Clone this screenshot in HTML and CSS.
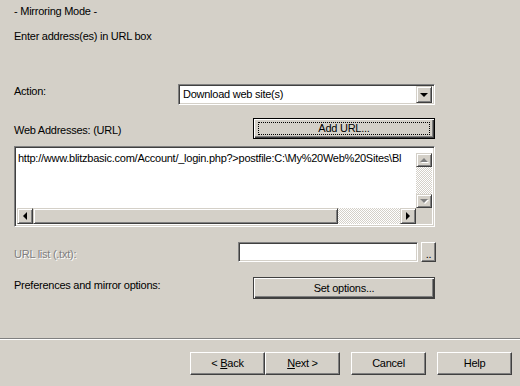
FILE: index.html
```html
<!DOCTYPE html>
<html lang="en">
<head>
  <meta charset="UTF-8">
  <title>Mirroring Mode</title>
  <link rel="stylesheet" href="styles.css">
</head>
<body>

<div class="panel">
  <div class="title">- Mirroring Mode -</div>
  <div class="hint">Enter address(es) in URL box</div>

  <div class="row row-action">
    <span class="label">Action:</span>
    <div class="select">
      <span class="select-text">Download web site(s)</span>
      <span class="drop"><i class="tri-down"></i></span>
    </div>
  </div>

  <div class="row row-web">
    <span class="label">Web Addresses: (URL)</span>
    <button class="btn btn-default btn-wide"><span class="focus">Add URL...</span></button>
  </div>

  <div class="memo">
    <div class="memo-text">http://www.blitzbasic.com/Account/_login.php?&gt;postfile:C:\My%20Web%20Sites\Bl</div>
    <div class="vscroll">
      <span class="sb-btn sb-v"><i class="tri-up dis"></i></span>
      <span class="track"></span>
      <span class="sb-btn sb-v"><i class="tri-down dis"></i></span>
    </div>
    <div class="hscroll">
      <span class="sb-btn"><i class="tri-left"></i></span>
      <span class="thumb"></span>
      <span class="track"></span>
      <span class="sb-btn"><i class="tri-right"></i></span>
    </div>
    <div class="corner"></div>
  </div>

  <div class="row row-list">
    <span class="label disabled">URL list (.txt):</span>
    <div class="file-pick">
      <div class="input"></div>
      <button class="btn btn-dots">..</button>
    </div>
  </div>

  <div class="row row-prefs">
    <span class="label">Preferences and mirror options:</span>
    <button class="btn btn-default btn-wide">Set options...</button>
  </div>
</div>

<div class="separator"></div>

<div class="footer">
  <button class="btn btn-nav">&lt;&nbsp;<u>B</u>ack</button>
  <button class="btn btn-nav"><u>N</u>ext&nbsp;&gt;</button>
  <button class="btn btn-nav gap">Cancel</button>
  <button class="btn btn-nav gap">Help</button>
</div>

</body>
</html>
```

FILE: styles.css
```css
body {
  margin: 0;
  background: #d4d0c8;
  font-family: "Liberation Sans", Arial, sans-serif;
  font-size: 11px;
  line-height: 13px;
  letter-spacing: -0.25px;
  color: #000;
  width: 520px;
  height: 386px;
  overflow: hidden;
}
.panel {
  display: flex;
  flex-direction: column;
  width: 421px;
  padding-left: 14px;
  padding-top: 5px;
}
.hint {
  margin-top: 12px;
}
.row {
  display: flex;
  justify-content: space-between;
  align-items: flex-start;
}
.row-action {
  margin-top: 41px;
  height: 21px;
}
.row-action .label { padding-top: 1px; }
.row-web {
  margin-top: 13px;
  height: 21px;
}
.row-web .label { padding-top: 6px; }
.row-list {
  margin-top: 15px;
  height: 20px;
}
.row-list .label { padding-top: 6px; }
.row-prefs {
  margin-top: 15px;
  height: 22px;
}
.row-prefs .label { padding-top: 2px; }
.label.disabled {
  color: #808080;
  text-shadow: 1px 1px 0 #fff;
}

/* sunken field */
.select, .input, .memo {
  box-sizing: border-box;
  background: #fff;
  border: 1px solid;
  border-color: #808080 #fff #fff #808080;
  box-shadow: inset 1px 1px 0 #404040, inset -1px -1px 0 #d4d0c8;
}
.select {
  width: 257px;
  height: 21px;
  display: flex;
  align-items: center;
  justify-content: space-between;
  padding: 2px;
}
.select-text {
  padding-left: 2px;
}
.drop {
  box-sizing: border-box;
  width: 16px;
  height: 17px;
  background: #d4d0c8;
  border: 1px solid;
  border-color: #d4d0c8 #404040 #404040 #d4d0c8;
  box-shadow: inset 1px 1px 0 #fff, inset -1px -1px 0 #808080;
  display: flex;
  align-items: center;
  justify-content: center;
}

/* arrow glyphs */
i {
  display: block;
  width: 0;
  height: 0;
  border-style: solid;
  border-color: transparent;
}
.tri-down { border-width: 4px 4px 0 4px; border-top-color: #000; }
.tri-up { border-width: 0 4px 4px 4px; border-bottom-color: #000; }
.tri-left { border-width: 4px 4px 4px 0; border-right-color: #000; }
.tri-right { border-width: 4px 0 4px 4px; border-left-color: #000; }
.tri-up.dis { border-bottom-color: #808080; filter: drop-shadow(1px 1px 0 #fff); }
.tri-down.dis { border-top-color: #808080; filter: drop-shadow(1px 1px 0 #fff); }

/* buttons */
.btn {
  box-sizing: border-box;
  font: inherit;
  letter-spacing: inherit;
  color: #000;
  background: #d4d0c8;
  border: 1px solid;
  border-color: #fff #404040 #404040 #fff;
  box-shadow: inset -1px -1px 0 #808080;
  padding: 0;
  margin: 0;
  display: flex;
  align-items: center;
  justify-content: center;
}
.btn-default {
  border: 1px solid #000;
  box-shadow: inset 1px 1px 0 #fff, inset -1px -1px 0 #404040, inset -2px -2px 0 #808080;
}
.btn-wide {
  width: 182px;
  height: 21px;
}
.row-prefs .btn-wide {
  height: 22px;
  border-color: #404040;
}
.focus {
  box-sizing: border-box;
  width: 172px;
  height: 13px;
  border: 1px dotted #000;
  line-height: 11px;
  text-align: center;
}

.memo {
  margin-top: 7px;
  height: 81px;
  padding: 2px;
  display: grid;
  grid-template-columns: 1fr 16px;
  grid-template-rows: 1fr 16px;
}
.memo-text {
  padding: 3px 0 0 1px;
  white-space: nowrap;
  overflow: hidden;
}
.vscroll {
  display: flex;
  flex-direction: column;
  padding-top: 4px;
  background: #fff;
}
.hscroll {
  display: flex;
}
.sb-btn {
  box-sizing: border-box;
  width: 16px;
  height: 16px;
  flex: none;
  background: #d4d0c8;
  border: 1px solid;
  border-color: #d4d0c8 #404040 #404040 #d4d0c8;
  box-shadow: inset 1px 1px 0 #fff, inset -1px -1px 0 #808080;
  display: flex;
  align-items: center;
  justify-content: center;
}
.sb-v {
  height: 14px;
}
.track {
  flex: 1;
  background: repeating-conic-gradient(#fff 0 25%, #d4d0c8 0 50%) 0 0 / 2px 2px;
}
.thumb {
  box-sizing: border-box;
  width: 305px;
  flex: none;
  background: #d4d0c8;
  border: 1px solid;
  border-color: #d4d0c8 #404040 #404040 #d4d0c8;
  box-shadow: inset 1px 1px 0 #fff, inset -1px -1px 0 #808080;
}
.corner {
  background: #d4d0c8;
}

.file-pick {
  display: flex;
  gap: 3px;
  margin-right: -1px;
}
.input {
  width: 180px;
  height: 20px;
}
.btn-dots {
  width: 15px;
  height: 20px;
  padding-top: 4px;
}

.separator {
  margin-top: 39px;
  border-top: 1px solid #808080;
  border-bottom: 1px solid #fff;
  height: 0;
}
.footer {
  display: flex;
  justify-content: flex-end;
  padding-right: 8px;
  margin-top: 12px;
}
.btn-nav {
  width: 75px;
  height: 23px;
}
.btn-nav.gap {
  margin-left: 11px;
}
```
